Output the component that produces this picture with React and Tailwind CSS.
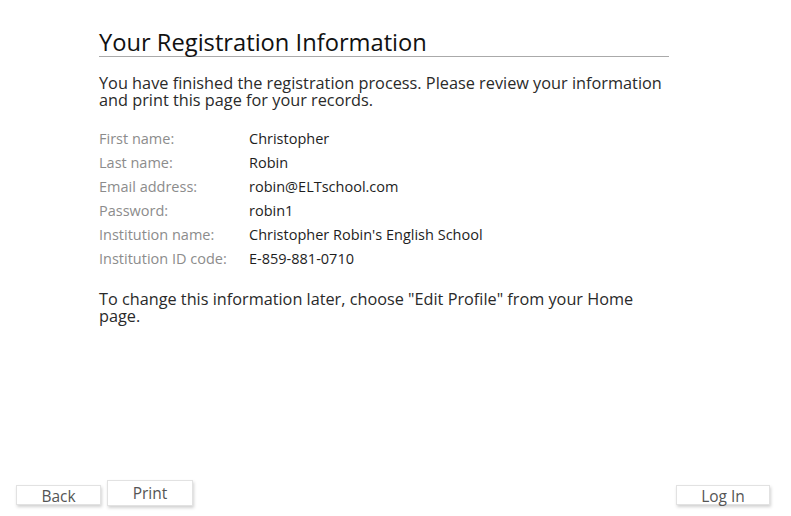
import React from "react";

const rows = [
  ["First name:", "Christopher"],
  ["Last name:", "Robin"],
  ["Email address:", "robin@ELTschool.com"],
  ["Password:", "robin1"],
  ["Institution name:", "Christopher Robin's English School"],
  ["Institution ID code:", "E-859-881-0710"],
];

const Button = ({ children, className }) => (
  <button
    className={`bg-white border border-[#e2e2e2] shadow-[1px_2px_3px_rgba(0,0,0,0.18)] text-[#555] text-[15.5px] ${className}`}
  >
    {children}
  </button>
);

export default function App() {
  return (
    <div
      className="flex flex-col h-[516px] w-[791px] bg-white"
      style={{ fontFamily: '"Open Sans", "Noto Sans", sans-serif' }}
    >
      <div className="flex-1 pl-[99px] pt-[28px]">
        <div className="w-[570px]">
          <h1 className="text-[23.7px] leading-[28px] text-[#111] border-b border-[#aaa]">
            Your Registration Information
          </h1>
          <p className="mt-[18px] text-[16.3px] leading-[17px] text-[#2a2a2a]">
            You have finished the registration process. Please review your information and print
            this page for your records.
          </p>
          <div className="mt-[18px]">
            {rows.map(([label, value]) => (
              <div key={label} className="flex text-[14.5px] leading-[24px]">
                <div className="w-[150px] text-[#8c8c8c]">{label}</div>
                <div className="text-[#1e1e1e]">{value}</div>
              </div>
            ))}
          </div>
          <p className="mt-[20px] text-[16.25px] leading-[17px] text-[#2a2a2a]">
            To change this information later, choose "Edit Profile" from your Home page.
          </p>
        </div>
      </div>
      <div className="flex items-end pl-[16px] pr-[21px] pb-[10px]">
        <Button className="w-[85px] h-[20px] leading-[20px] mb-[1px]">Back</Button>
        <Button className="ml-[6px] w-[86px] h-[26px] leading-[24px]">Print</Button>
        <div className="flex-1" />
        <Button className="w-[94px] h-[20px] leading-[20px] mb-[1px]">Log In</Button>
      </div>
    </div>
  );
}
